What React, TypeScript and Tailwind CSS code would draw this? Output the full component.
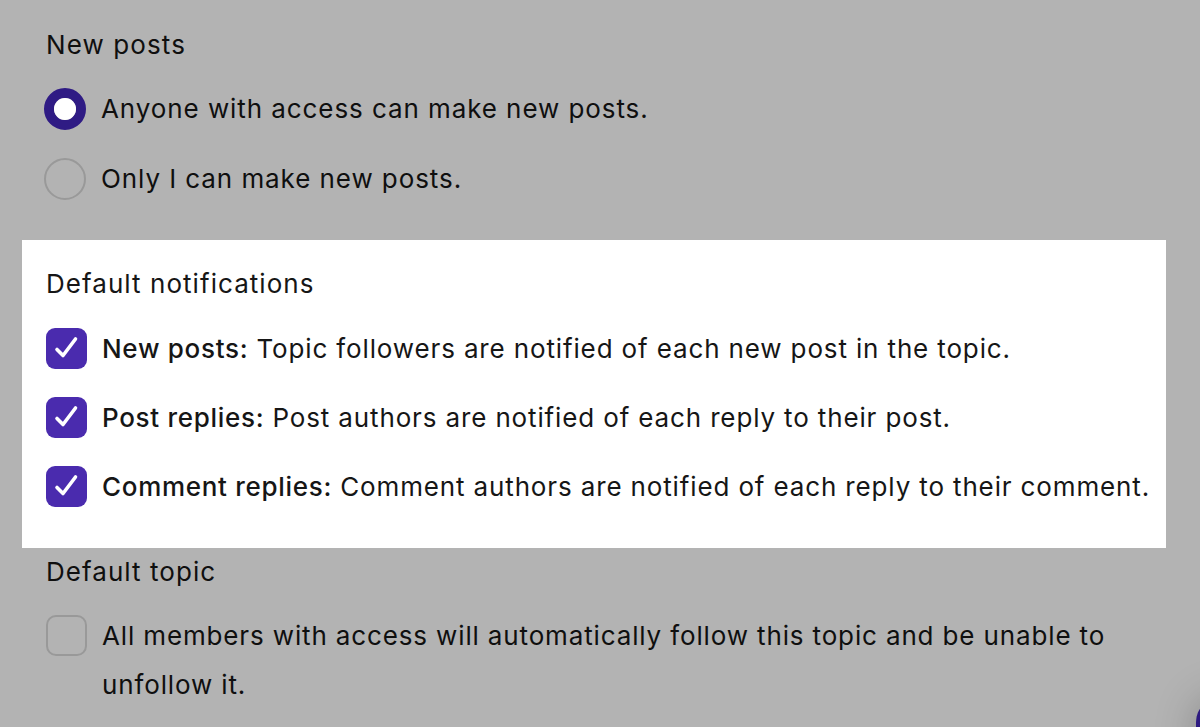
import React from "react";

const font = { fontFamily: "Inter, 'Noto Sans', sans-serif" };

function Check() {
  return (
    <svg width="41" height="41" viewBox="0 0 41 41" className="block">
      <path d="M11 21.5 L17 27.5 L29.5 11" fill="none" stroke="white" strokeWidth="3.6" strokeLinecap="round" strokeLinejoin="round" />
    </svg>
  );
}

function CheckedBox() {
  return (
    <div className="w-[41px] h-[41px] shrink-0 rounded-[9px] bg-[#4a2bae] flex items-center justify-center">
      <Check />
    </div>
  );
}

function CheckRow({ label, text }: { label: string; text: string }) {
  return (
    <div className="flex items-center gap-[15px] h-[41px]">
      <CheckedBox />
      <div className="text-[26px] leading-[36px] tracking-[0.86px] text-[#161616] whitespace-nowrap">
        <span className="font-medium tracking-[0.7px]">{label}</span> {text}
      </div>
    </div>
  );
}

export default function App() {
  return (
    <div style={font} className="relative w-[1200px] h-[727px] overflow-hidden bg-[#b3b3b3]">
      <div className="pl-[22px] pt-[27px] w-[1166px]">
        {/* New posts */}
        <div className="pl-[24px]">
          <div className="text-[26px] leading-[36px] tracking-[1.1px] text-[#0f0f0f]">New posts</div>
          <div className="mt-[25px] flex flex-col gap-[28px]">
            <div className="flex items-center gap-[15px] h-[42px]">
              <div className="w-[42px] h-[42px] shrink-0 rounded-full border-[10px] border-[#2f1b84] -ml-[2px]">
                <div className="w-full h-full rounded-full bg-white" />
              </div>
              <div className="text-[26px] leading-[36px] tracking-[0.92px] text-[#0f0f0f]">Anyone with access can make new posts.</div>
            </div>
            <div className="flex items-center gap-[15px] h-[42px]">
              <div className="w-[42px] h-[42px] shrink-0 rounded-full border-2 border-[#999999] -ml-[2px]" />
              <div className="text-[26px] leading-[36px] tracking-[0.92px] text-[#0f0f0f]">Only I can make new posts.</div>
            </div>
          </div>
        </div>

        {/* Default notifications highlighted */}
        <div className="mt-[40px] bg-white pl-[24px] pr-[8px] pt-[26px] pb-[41px]">
          <div className="text-[26px] leading-[36px] tracking-[1.05px] text-[#161616]">Default notifications</div>
          <div className="mt-[26px] flex flex-col gap-[28px]">
            <CheckRow label="New posts:" text="Topic followers are notified of each new post in the topic." />
            <CheckRow label="Post replies:" text="Post authors are notified of each reply to their post." />
            <CheckRow label="Comment replies:" text="Comment authors are notified of each reply to their comment." />
          </div>
        </div>

        {/* Default topic */}
        <div className="pl-[24px] pr-[8px] pt-[6px]">
          <div className="text-[26px] leading-[36px] tracking-[1.05px] text-[#0f0f0f]">Default topic</div>
          <div className="mt-[21px] flex items-start gap-[15px]">
            <div className="mt-[4px] w-[41px] h-[41px] shrink-0 rounded-[10px] border-2 border-[#999999]" />
            <div className="text-[26px] leading-[49px] tracking-[0.86px] text-[#0f0f0f]">
              All members with access will automatically follow this topic and be unable to unfollow it.
            </div>
          </div>
        </div>
      </div>

      {/* floating widget edge */}
      <div className="absolute left-[1196px] top-[698px] w-[70px] h-[70px] rounded-[24px] bg-[#2d1a80] shadow-[0_0_40px_rgba(0,0,0,0.25)]" />
    </div>
  );
}
